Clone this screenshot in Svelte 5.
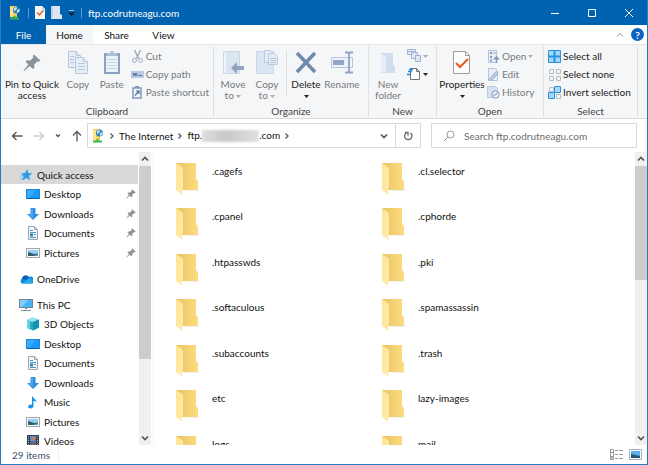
<script>
	let search = $state('');
	let activeTab = $state('Home');
	let current = $state('Quick access');

	const tree = [
		[
			{ icon: 'star', name: 'Quick access', root: true },
			{ icon: 'desktop', name: 'Desktop', pinned: true },
			{ icon: 'download', name: 'Downloads', pinned: true },
			{ icon: 'document', name: 'Documents', pinned: true },
			{ icon: 'picture', name: 'Pictures', pinned: true }
		],
		[{ icon: 'cloud', name: 'OneDrive', root: true }],
		[
			{ icon: 'pc', name: 'This PC', root: true },
			{ icon: 'cube', name: '3D Objects' },
			{ icon: 'desktop', name: 'Desktop' },
			{ icon: 'document', name: 'Documents' },
			{ icon: 'download', name: 'Downloads' },
			{ icon: 'music', name: 'Music' },
			{ icon: 'picture', name: 'Pictures' },
			{ icon: 'video', name: 'Videos' }
		]
	];

	const folders = [
		'.cagefs', '.cl.selector',
		'.cpanel', '.cphorde',
		'.htpasswds', '.pki',
		'.softaculous', '.spamassassin',
		'.subaccounts', '.trash',
		'etc', 'lazy-images',
		'logs', 'mail'
	];
</script>

{#snippet ftp()}
	<svg width="14" height="14" viewBox="0 0 14 14">
		<path d="M2 0h7v11H2z" fill="#f5cf55" />
		<path d="M2 0l3 2v9l-3-1z" fill="#ffe48b" />
		<circle cx="8.5" cy="4" r="3.5" fill="#2f80c0" />
		<path d="M6 2l2-1 1 1-1 2-2 1zM9 4l3-1-1 3-2 1z" fill="#c6e6f4" />
		<path d="M2 12.500h9M6.500 10v3" stroke="#37b34a" stroke-width="2" />
	</svg>
{/snippet}

{#snippet chevron(dir)}
	<svg width="8" height="8" viewBox="0 0 8 8" fill="none" stroke="#555" stroke-width="1.3">
		{#if dir === 'right'}<path d="M2.500 1.500L5 4 2.500 6.500" />
		{:else if dir === 'up'}<path d="M1 5.500l3-3 3 3" stroke-width="1.7" />
		{:else}<path d="M1 2.500l3 3 3-3" stroke-width="1.7" />{/if}
	</svg>
{/snippet}

{#snippet treeIcon(name)}
	<svg width="14" height="14" viewBox="0 0 14 14">
		{#if name === 'star'}
			<path d="M8.500 1l.700 4 4.300.5-3.400 2.300.9 4.700L7.500 10l-4.200 2.500 1.400-4.200L2 5.500l4-.5z" fill="#2f9be8" />
			<path d="M1.500 8h3M1 10.500h3" stroke="#6dbcf2" />
		{:else if name === 'desktop'}
			<rect x=".5" y="2.5" width="13" height="9" fill="#1a9af5" stroke="#1a86dc" />
			<path d="M1 3h9L3 11H1z" fill="#35adff" />
			<path d="M1 11.500h12" stroke="#0b5fa5" />
		{:else if name === 'download'}
			<path d="M4.500 1h5v6H13l-6 6-6-6h3.500z" fill="#2f8ce0" />
			<path d="M5 1.500h2v10L2 7.500h3z" fill="#4aa5f0" />
		{:else if name === 'document'}
			<path d="M2.500.5h6l3 3v10h-9z" fill="#f4f8fb" stroke="#9aa7b2" />
			<path d="M8.500.5v3h3" fill="none" stroke="#9aa7b2" />
			<path d="M4 4.500h3M4 6.500h6M8 8.500h2M4 11.500h6" stroke="#3b9add" />
			<path d="M4 7.500h3v3H4z" fill="#56798f" />
		{:else if name === 'picture'}
			<rect x=".5" y="2.5" width="13" height="9" fill="#f7f9fa" stroke="#a0a6aa" />
			<path d="M2 4h10v6H2z" fill="#96cdf1" />
			<path d="M2 6l3 1 3 1 4-.5V10H2z" fill="#2f5d68" />
			<path d="M7 10l5-2v2z" fill="#53a2c5" />
		{:else if name === 'cloud'}
			<path d="M3 11.500a3 3 0 0 1 0-5 4 4 0 0 1 7-1.500 3.500 3.500 0 0 1 3 6.500z" fill="#1686d9" />
			<path d="M3 6.500a4 4 0 0 1 7-1.500L7 8z" fill="#0a5cae" />
			<path d="M3 11.500l6-4.500c2-1 4 0 4.500 1.500s-.5 3-2 3z" fill="#28a8ea" />
		{:else if name === 'pc'}
			<rect x=".5" y="1.5" width="13" height="8" fill="#49b3f4" stroke="#6f8796" />
			<path d="M1 2h8L3 9H1z" fill="#83cffa" />
			<path d="M6 10h2v1H6z" fill="#7b8a94" />
			<path d="M2 12.500h10" stroke="#7794a6" />
		{:else if name === 'cube'}
			<path d="M1 3l5-2.500L13 2.500v8L7 13.500 1 11z" fill="#25aec4" />
			<path d="M1 3l5-2.500 7 2-6 2.500z" fill="#9be5ee" />
			<path d="M7 5l6-2.500v8l-6 3z" fill="#1593ad" />
			<path d="M1 3l3 1v8l-3-1z" fill="#64d2df" />
		{:else if name === 'music'}
			<path d="M6 .5c1 3 5 3.500 4.500 7.500-.4-1.500-1.500-2-3-2v5c0 1.500-1.500 2.500-3 2.500S2 12.800 2 11.500 4 9 6 9.500z" fill="#1d94e8" />
		{:else if name === 'video'}
			<path d="M1 1h12v12H1z" fill="#35404c" />
			<path d="M4 2h6v5H4z" fill="#4b8fe6" />
			<path d="M4 7h6v5H4z" fill="#6b6574" />
			<path d="M6 3h3v3L5 6z" fill="#c77e46" />
			<path d="M2.500 2v10M11.500 2v10" stroke="#a1a9b2" stroke-dasharray="1 1" />
		{/if}
	</svg>
{/snippet}

{#snippet pin(size)}
	<svg width={size} height={size} viewBox="0 0 18 18" fill="#8a9399">
		<path d="M11 .5l6.500 6-1.800 1.200-1.500-.2-3 3 .3 3-1.600 1.500L6.700 12 1 17.200l-.5-.4L5.300 10.500 2.500 7.700 4 6.200l3.200.3 3-3-.2-1.600z" />
	</svg>
{/snippet}

{#snippet folder()}
	<svg width="24" height="34" viewBox="0 0 24 34">
		<defs>
			<linearGradient id="back" x2="1">
				<stop offset="0" stop-color="#e9c263" />
				<stop offset="1" stop-color="#fddd80" />
			</linearGradient>
			<linearGradient id="flap" x2="1" y2="1">
				<stop offset="0" stop-color="#ffe491" />
				<stop offset="1" stop-color="#ffebb0" />
			</linearGradient>
		</defs>
		<path d="M7 28h15l2-1-2-1z" fill="#eee" />
		<path d="M0 0h20v16l2 2v9H5z" fill="url(#back)" />
		<path d="M0 0l6 4q1 1 1 3v17q0 2-1 3l.7 5L0 27z" fill="url(#flap)" />
	</svg>
{/snippet}

{#snippet caret(dark)}
	<svg width="5" height="3" viewBox="0 0 5 3"><path d="M0 0h5L2.500 3z" fill={dark ? '#222' : '#a9aeb3'} /></svg>
{/snippet}

<div class="window">
	<header class="titlebar">
		<div class="quick">
			{@render ftp()}
			<i class="bar"></i>
			<button aria-label="Properties">
				<svg width="10" height="13" viewBox="0 0 10 13">
					<path d="M0 0h7l3 3v10H0z" fill="#f7f5f5" /><path d="M7 0v3h3" fill="#c9d1da" />
					<path d="M2 6.500L4.500 9 8.500 4" fill="none" stroke="#e9622f" stroke-width="1.5" />
				</svg>
			</button>
			<button aria-label="New folder">
				<svg width="11" height="13" viewBox="0 0 11 13">
					<path d="M0 0h9v8l2 1v4H0z" fill="#dce7f6" /><path d="M0 0l2 1v11H0z" fill="#c0d3ed" />
				</svg>
			</button>
			<button aria-label="Customize">
				<svg width="7" height="6" viewBox="0 0 7 6"><path d="M1 .5h5" stroke="#9fc1e2" /><path d="M0 2.500h7L3.500 6z" fill="#0b1d30" /></svg>
			</button>
			<i class="bar"></i>
		</div>
		<h1>ftp.codrutneagu.com</h1>
		<div class="controls">
			<button aria-label="Minimize"><svg width="10" height="10"><path d="M1 5.500h8" stroke="#fff" /></svg></button>
			<button aria-label="Maximize"><svg width="10" height="10"><path d="M1.500 1.500h7v7h-7z" fill="none" stroke="#fff" /></svg></button>
			<button aria-label="Close"><svg width="10" height="10"><path d="M1 1l8 8M9 1L1 9" stroke="#fff" /></svg></button>
		</div>
	</header>

	<div class="tabs">
		<button class="file">File</button>
		{#each ['Home', 'Share', 'View'] as tab}
			<button class="tab" class:active={activeTab === tab} onclick={() => (activeTab = tab)}>{tab}</button>
		{/each}
		<div class="help">
			<svg width="8" height="8" viewBox="0 0 8 8" fill="none" stroke="#8c8c8c"><path d="M1 5.500l3-3 3 3" /></svg>
			<button aria-label="Help">?</button>
		</div>
	</div>

	<div class="ribbon">
		<section class="group clipboard">
			<div class="tools">
				<button class="big on wide">
					<span class="art">{@render pin(18)}</span>
					Pin to Quick access
				</button>
				<button class="big">
					<span class="art">
						<svg width="22" height="25" viewBox="0 0 22 25" fill="#e5edf7" stroke="#b7c6da">
							<path d="M1.500 1.500h8l4 4v12h-12z" /><path d="M9.500 1.500v4h4M3 6.500h5M3 9.500h4M3 12.500h4" />
							<path d="M8.500 7.500h8l4 4v12h-12z" /><path d="M16.500 7.500v4h4M11 13.500h7M11 16.500h7M11 19.500h7" />
						</svg>
					</span>
					Copy
				</button>
				<button class="big">
					<span class="art">
						<svg width="18" height="25" viewBox="0 0 18 25">
							<path d="M1 3h16v21H1z" fill="#8ba2c0" /><path d="M3 6h12v16H3z" fill="#e9eff8" />
							<path d="M4 3h3l1-2h2l1 2h3v3H4z" fill="#adbdd2" />
							<path d="M4 9.500h10M4 12.500h10M4 15.500h10M4 18.500h10" stroke="#cbd8e8" />
						</svg>
					</span>
					Paste
				</button>
				<div class="smalls">
					<button class="small">
						<svg width="13" height="13" viewBox="0 0 13 13" fill="none" stroke="#9aa9bf">
							<path d="M3.500 0l4 8.500M9.500 0l-4 8.500" stroke-width="1.4" /><circle cx="3.5" cy="10.3" r="2" /><circle cx="9.5" cy="10.3" r="2" />
						</svg>Cut
					</button>
					<button class="small">
						<svg width="13" height="13" viewBox="0 0 13 13">
							<path d="M0 3h13v7H0z" fill="#b9c9df" /><path d="M2 5l1 3 1-3 1 3 1-3M7 7.500h4" fill="none" stroke="#5d789f" />
						</svg>Copy path
					</button>
					<button class="small">
						<svg width="13" height="13" viewBox="0 0 13 13">
							<path d="M1 1h10v12H1z" fill="#9bb0cb" /><path d="M3 3h6v8H3z" fill="#f0f5fb" /><path d="M4 0h4v2H4z" fill="#8399b7" />
							<path d="M4 9.500l3.500-4M5 5h3v3" fill="none" stroke="#5a7294" stroke-width="1.2" />
						</svg>Paste shortcut
					</button>
				</div>
			</div>
			<h2>Clipboard</h2>
		</section>

		<section class="group organize">
			<div class="tools">
				<button class="big">
					<span class="art">
						<svg width="22" height="25" viewBox="0 0 22 25">
							<path d="M1.500 1.500h16v22h-16z" fill="#dce6f2" stroke="#cbd8e8" /><path d="M2 2l2 1v20H2z" fill="#eff4fa" />
							<path d="M9 18l6-6v4h7v4h-7v4z" fill="#91a4bf" />
						</svg>
					</span>
					Move to {@render caret(false)}
				</button>
				<button class="big">
					<span class="art">
						<svg width="22" height="25" viewBox="0 0 22 25" fill="#e4ecf6" stroke="#b9c8dc">
							<path d="M.5 1.500h17v22H.5z" stroke="#cbd8e8" fill="#dce6f2" />
							<path d="M8.500.5h6l2 2v10h-8z" /><path d="M12.500 3.500h6l3 3v8h-9z" /><path d="M14 8.500h6M14 10.500h6M14 12.500h6" />
						</svg>
					</span>
					Copy to {@render caret(false)}
				</button>
				<i class="rule"></i>
				<button class="big on">
					<span class="art">
						<svg width="22" height="25" viewBox="0 0 22 25"><path d="M2 3l18 19M20 3L2 22" stroke="#7089ad" stroke-width="3.5" /></svg>
					</span>
					Delete<br />{@render caret(true)}
				</button>
				<button class="big">
					<span class="art">
						<svg width="24" height="25" viewBox="0 0 24 25" fill="none" stroke="#91a6c3">
							<path d="M1.500 7.500h21v10h-21z" fill="#edf3fa" stroke="#b5c7de" /><path d="M3 10h11v5H3z" fill="#91a6c3" stroke="none" />
							<path d="M15 2.500h3l1 1 1-1h3M15 22.500h3l1-1 1 1h3M19 3v19" stroke-width="1.8" />
						</svg>
					</span>
					Rename
				</button>
			</div>
			<h2>Organize</h2>
		</section>

		<section class="group new">
			<div class="tools">
				<button class="big">
					<span class="art">
						<svg width="18" height="25" viewBox="0 0 18 25">
							<path d="M2 3h12v12l2 1v7H2z" fill="#cfddec" /><path d="M2 3l5 3v15l-1 3-4-3z" fill="#e4edf7" />
						</svg>
					</span>
					New folder
				</button>
				<div class="smalls">
					<button class="small" aria-label="New item">
						<svg width="14" height="14" viewBox="0 0 14 14" fill="#dfe9f5" stroke="#9fb3ce"><path d="M.5.5h8v5h-8z" /><path d="M4.500 3.500h6v6h-6z" /><path d="M8.500 6.500h5v6h-5z" /><path d="M0 2.500h7" /></svg>
						{@render caret(false)}
					</button>
					<button class="small" aria-label="Easy access">
						<svg width="14" height="14" viewBox="0 0 14 14"><path d="M3.500 1.500h6l3 3v8h-9z" fill="#fff" stroke="#6d747a" /><path d="M9.500 1.500v3h3" fill="none" stroke="#6d747a" /><path d="M0 7.500h4M1 4.500h4M2 2.500h4" stroke="#2389d8" stroke-width="1.5" /></svg>
						{@render caret(true)}
					</button>
				</div>
			</div>
			<h2>New</h2>
		</section>

		<section class="group open">
			<div class="tools">
				<button class="big on">
					<span class="art">
						<svg width="20" height="25" viewBox="0 0 20 25">
							<path d="M1.500 1.500h12l4 4v18h-16z" fill="#fcfcfc" stroke="#9d9d9d" /><path d="M13.500 1.500v4h4" fill="none" stroke="#9d9d9d" />
							<path d="M4 13l4 4 8-8" fill="none" stroke="#ef5a1c" stroke-width="2" />
						</svg>
					</span>
					Properties<br />{@render caret(true)}
				</button>
				<div class="smalls">
					<button class="small">
						<svg width="13" height="13" viewBox="0 0 13 13"><path d="M1.500.5h8v12h-8z" fill="#e6edf7" stroke="#b3c4dc" /><path d="M3 2h2v2H3zM3 6h2v2H3zM3 9.500h2v2H3z" fill="#7e97ba" /><path d="M6 3h3" stroke="#9fb3cf" /><path d="M9.500 13V8M7 9.500l2.500-2.500L12 9.500" fill="none" stroke="#7f98ba" stroke-width="1.5" /></svg>
						Open {@render caret(false)}
					</button>
					<button class="small">
						<svg width="13" height="13" viewBox="0 0 13 13"><path d="M1.500.5h7l2 2v10h-9z" fill="#e8eff8" stroke="#b3c4dc" /><path d="M2 11.500l7-8 2.500 2-7 7z" fill="#b9cbe2" stroke="#9fb4d1" /></svg>
						Edit
					</button>
					<button class="small">
						<svg width="13" height="13" viewBox="0 0 13 13"><path d="M.5.5h8l2 2v9H.5z" fill="#d8e3f2" stroke="#b9c9df" /><circle cx="8.5" cy="8.5" r="3.7" fill="#e6eef8" stroke="#8299bc" /><path d="M10.500 6.500l-2 2.500H6" fill="none" stroke="#8299bc" /></svg>
						History
					</button>
				</div>
			</div>
			<h2>Open</h2>
		</section>

		<section class="group select">
			<div class="tools">
				<div class="smalls">
					<button class="small on">
						<svg width="13" height="13" viewBox="0 0 13 13" fill="#a4d7fa" stroke="#2793df"><path d="M.5.5h12v12H.5z" /><path d="M6.500 0v13M0 6.500h13" stroke-width="2" /></svg>
						Select all
					</button>
					<button class="small on">
						<svg width="13" height="13" viewBox="0 0 13 13" fill="none" stroke="#b8bdc2"><path d="M1.500 1.500h4v4h-4zM8.500 1.500h4v4h-4zM1.500 8.500h4v4h-4zM8.500 8.500h4v4h-4z" /></svg>
						Select none
					</button>
					<button class="small on">
						<svg width="13" height="13" viewBox="0 0 13 13"><path d="M1.500 1.500h4v4h-4zM8.500 8.500h4v4h-4z" fill="none" stroke="#b8bdc2" /><path d="M6.500.5h6v6h-6zM.5 6.500h6v6h-6z" fill="#a4d7fa" stroke="#2793df" /></svg>
						Invert selection
					</button>
				</div>
			</div>
			<h2>Select</h2>
		</section>
	</div>

	<div class="navigation">
		<div class="arrows">
			<button aria-label="Back"><svg width="12" height="12" viewBox="0 0 12 12"><path d="M11.500 6H1.500M5.500 2l-4 4 4 4" /></svg></button>
			<button aria-label="Forward" disabled><svg width="12" height="12" viewBox="0 0 12 12"><path d="M.5 6h10M6.500 2l4 4-4 4" /></svg></button>
			<button aria-label="Recent locations"><svg width="6" height="12" viewBox="0 0 6 12"><path d="M1 4.500l2 2 2-2" /></svg></button>
			<button aria-label="Up"><svg width="12" height="12" viewBox="0 0 12 12"><path d="M6 11.500v-10M2 5.500l4-4 4 4" /></svg></button>
		</div>
		<div class="address">
			{@render ftp()}
			<span class="crumb-arrow">{@render chevron('right')}</span>
			<button>The Internet</button>
			<span class="crumb-arrow">{@render chevron('right')}</span>
			<button>ftp.<span class="hidden-name"></span>.com</button>
			<span class="crumb-arrow">{@render chevron('right')}</span>
			<button class="history" aria-label="Previous locations">{@render chevron('down')}</button>
			<button class="refresh" aria-label="Refresh">
				<svg width="10" height="10" viewBox="0 0 10 10" fill="none" stroke="#666" stroke-width="1.3"><path d="M7.500 2A3.700 3.700 0 1 1 3 2M2 1.500h3v3" /></svg>
			</button>
		</div>
		<label class="search">
			<svg width="12" height="12" viewBox="0 0 12 12" fill="none" stroke="#999"><circle cx="7.5" cy="4.5" r="3.5" /><path d="M5 7L1 11" /></svg>
			<input type="text" aria-label="Search" placeholder="Search ftp.codrutneagu.com" bind:value={search} />
		</label>
	</div>

	<main>
		<nav>
			<div class="tree">
				{#each tree as group}
					<ul>
						{#each group as item}
							<li>
								<a
									href="#{item.name}"
									class:root={item.root}
									class:current={current === item.name}
									onclick={() => (current = item.name)}
								>
									{@render treeIcon(item.icon)}
									{item.name}
									{#if item.pinned}<span class="pinned">{@render pin(10)}</span>{/if}
								</a>
							</li>
						{/each}
					</ul>
				{/each}
			</div>
			<div class="scrollbar">
				<button aria-label="Scroll up">{@render chevron('up')}</button>
				<div class="track"><div class="thumb long"></div></div>
				<button aria-label="Scroll down">{@render chevron('down')}</button>
			</div>
		</nav>
		<div class="files">
			{#each folders as name}
				<a href="#{name}">{@render folder()}<span>{name}</span></a>
			{/each}
		</div>
		<div class="scrollbar">
			<button aria-label="Scroll up">{@render chevron('up')}</button>
			<div class="track"><div class="thumb"></div></div>
			<button aria-label="Scroll down">{@render chevron('down')}</button>
		</div>
	</main>

	<footer>
		<span class="count">29 items</span>
		<div class="views">
			<button aria-label="Details view">
				<svg width="13" height="11" viewBox="0 0 13 11" fill="none" stroke="#999"><path d="M.5.5h3v10h-3zM.5 3.500h3M.5 7.500h3" /><path d="M5 1.500h3M9 1.500h4M5 5.500h3M9 5.500h4M5 9.500h3M9 9.500h4" /><path d="M1 9h2" stroke="#e46a5a" /></svg>
			</button>
			<button aria-label="Large icons view">
				<svg width="13" height="11" viewBox="0 0 13 11"><path d="M.5.5h12v10H.5z" fill="#fff" stroke="#a5b2bd" /><path d="M2 2h9v7H2z" fill="#58b1ea" /><path d="M2 5l4 1 5 1v2H2z" fill="#26566f" /></svg>
			</button>
		</div>
	</footer>
</div>

<style>
	:global(body) {
		margin: 0;
	}
	.window {
		display: flex;
		flex-direction: column;
		box-sizing: border-box;
		height: 100vh;
		border: 1px solid #2a7abf;
		border-top: none;
		background: #fff;
		color: #111;
		font-family: Lato, 'Open Sans', sans-serif;
		font-size: 10px;
		line-height: 12px;
		overflow: hidden;
	}
	button,
	input {
		margin: 0;
		padding: 0;
		border: none;
		background: none;
		color: inherit;
		font: inherit;
	}
	a {
		color: inherit;
		text-decoration: none;
	}
	svg {
		flex: none;
	}
	h1,
	h2 {
		margin: 0;
		font-size: 10px;
		font-weight: normal;
	}

	.titlebar {
		display: flex;
		flex: none;
		align-items: center;
		height: 25px;
		background: #0063b1;
		color: #fff;
	}
	.quick {
		display: flex;
		align-items: center;
		gap: 6px;
		padding: 0 6px 0 7px;
	}
	.quick button {
		display: flex;
	}
	.bar {
		width: 1px;
		height: 10px;
		background: #5c9bcf;
	}
	.controls {
		display: flex;
		margin-left: auto;
	}
	.controls button {
		display: flex;
		align-items: center;
		justify-content: center;
		width: 37px;
		height: 25px;
	}

	.tabs {
		display: flex;
		flex: none;
		height: 19px;
	}
	.file {
		width: 45px;
		background: #0063b1;
		color: #fff;
	}
	.tab {
		width: 47px;
	}
	.tab.active {
		background: #f5f6f7;
	}
	.help {
		display: flex;
		align-items: center;
		gap: 7px;
		margin-left: auto;
		padding-right: 3px;
	}
	.help button {
		width: 13px;
		height: 13px;
		border-radius: 50%;
		background: #0a63c0;
		color: #fff;
		font-weight: bold;
	}

	.ribbon {
		display: flex;
		flex: none;
		height: 75px;
		border-top: 1px solid #e6e7e8;
		border-bottom: 1px solid #dadbdc;
		box-sizing: border-box;
		background: #f5f6f7;
	}
	.group {
		display: flex;
		flex-direction: column;
		justify-content: space-between;
		box-sizing: border-box;
		margin: 1px 0;
		padding: 0 2px;
		border-right: 1px solid #dfe1e3;
	}
	.group h2 {
		color: #444;
		text-align: center;
	}
	.clipboard {
		width: 213px;
	}
	.organize {
		width: 155px;
	}
	.new {
		width: 68px;
	}
	.open {
		width: 107px;
	}
	.select {
		width: 94px;
	}
	.tools {
		display: flex;
		align-items: flex-start;
	}
	.big {
		width: 34px;
		color: #777b80;
		line-height: 11px;
		text-align: center;
	}
	.big.wide {
		width: 58px;
	}
	.organize .big:last-child {
		width: 38px;
	}
	.open .big {
		width: 46px;
	}
	.big.on,
	.small.on {
		color: #1c1c1c;
	}
	.big svg {
		vertical-align: middle;
	}
	.art {
		display: flex;
		align-items: center;
		justify-content: center;
		height: 33px;
	}
	.rule {
		width: 1px;
		height: 46px;
		margin: 4px 2px;
		background: #dfe1e3;
	}
	.smalls {
		display: flex;
		flex-direction: column;
		padding: 1px 2px;
	}
	.small {
		display: flex;
		align-items: center;
		gap: 2px;
		height: 18px;
		color: #777b80;
		white-space: nowrap;
	}

	.navigation {
		display: flex;
		flex: none;
		align-items: center;
		height: 33px;
		padding-right: 10px;
	}
	.arrows {
		display: flex;
		flex: none;
		justify-content: space-between;
		width: 72px;
		padding: 0 4px 0 10px;
	}
	.arrows button {
		display: flex;
		fill: none;
		stroke: #555;
		stroke-width: 1.3;
	}
	.arrows button:disabled {
		stroke: #ccc;
	}
	.address,
	.search {
		display: flex;
		align-items: center;
		box-sizing: border-box;
		height: 25px;
		border: 1px solid #d9d9d9;
	}
	.address {
		flex: 5 1 334px;
		padding-left: 3px;
	}
	.crumb-arrow {
		display: flex;
		width: 8px;
		padding: 0 3px;
	}
	.hidden-name {
		display: inline-block;
		width: 57px;
		height: 12px;
		background: linear-gradient(90deg, #ddd, #c9c9c9 40%, #d2d2d2 70%, #e2e2e2);
		filter: blur(1px);
		vertical-align: middle;
	}
	.history {
		display: flex;
		margin-left: auto;
		padding-right: 7px;
	}
	.refresh {
		display: flex;
		align-items: center;
		justify-content: center;
		align-self: stretch;
		width: 25px;
		border-left: 1px solid #d9d9d9;
	}
	.search {
		flex: 3 1 206px;
		gap: 9px;
		margin-left: 10px;
		padding-left: 11px;
	}
	.search input {
		flex: 1;
		min-width: 0;
		outline: none;
	}
	.search input::placeholder {
		color: #6d6d6d;
		opacity: 1;
	}

	main {
		display: flex;
		flex: 1;
		min-height: 0;
	}
	nav {
		display: flex;
		width: 152px;
		flex: none;
		border-right: 1px solid #f3f3f3;
	}
	.tree {
		display: flex;
		flex: 1;
		flex-direction: column;
		gap: 7px;
		margin-right: 1px;
		padding-top: 13px;
		overflow: hidden;
	}
	ul {
		display: grid;
		grid-auto-rows: 19px 20px;
		margin: 0;
		padding: 0;
		list-style: none;
	}
	.tree a {
		display: flex;
		align-items: center;
		gap: 4px;
		height: 100%;
		padding-left: 25px;
	}
	.tree a.root {
		padding-left: 18px;
	}
	.tree a.current {
		background: #d9d9d9;
	}
	.pinned {
		display: flex;
		margin-left: auto;
		padding-right: 2px;
	}
	.scrollbar {
		display: flex;
		flex: none;
		flex-direction: column;
		width: 12px;
		background: #f0f0f0;
	}
	nav .scrollbar {
		margin-right: 2px;
	}
	.scrollbar button {
		display: flex;
		align-items: center;
		justify-content: center;
		height: 14px;
	}
	.track {
		flex: 1;
	}
	.thumb {
		height: 43%;
		background: #cdcdcd;
	}
	.thumb.long {
		height: 73%;
	}
	.files {
		display: grid;
		flex: 1;
		grid-template-columns: repeat(auto-fill, 206px);
		grid-auto-rows: 45px 46px;
		padding: 11px 0 0 22px;
		overflow: hidden;
	}
	.files a {
		display: flex;
		gap: 12px;
	}
	.files span {
		padding-top: 2px;
	}

	footer {
		display: flex;
		flex: none;
		align-items: center;
		justify-content: space-between;
		height: 19px;
		padding: 0 5px 0 11px;
		color: #3b5068;
	}
	.count {
		padding-right: 8px;
		border-right: 1px solid #eee;
	}
	.views {
		display: flex;
		gap: 6px;
	}
	.views button {
		display: flex;
	}
</style>
